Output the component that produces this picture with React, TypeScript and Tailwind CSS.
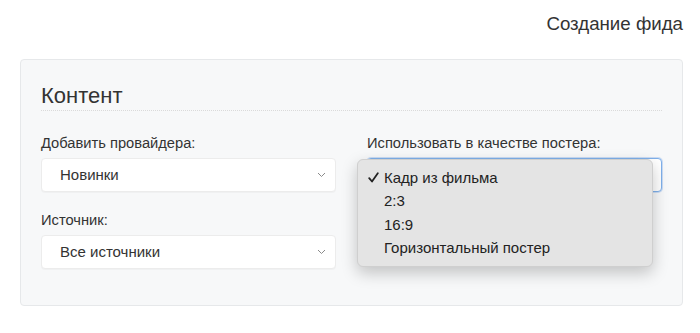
const posterOptions = ["Кадр из фильма", "2:3", "16:9", "Горизонтальный постер"];

function Chevron() {
  return (
    <svg width="9" height="6" viewBox="0 0 9 6" className="shrink-0">
      <path d="M1 1l3.5 3.5L8 1" fill="none" stroke="#8a8a8a" strokeWidth="1" />
    </svg>
  );
}

function Check() {
  return (
    <svg width="11" height="11" viewBox="0 0 11 11">
      <path d="M1.2 6.2l2.8 3.3L9.8 1.2" fill="none" stroke="#222" strokeWidth="1.8" strokeLinecap="round" strokeLinejoin="round" />
    </svg>
  );
}

function FakeSelect({ value, focused }: { value: string; focused?: boolean }) {
  return (
    <div
      className={`flex h-[34px] items-center justify-between rounded-[4px] bg-white pl-[18px] pr-[9px] text-[15px] text-[#333] ${
        focused
          ? "border border-[#7fb0ea] shadow-[0_0_0_1px_rgba(120,170,235,0.35)]"
          : "border border-[#ececec] shadow-[0_1px_1px_rgba(0,0,0,0.03)]"
      }`}
    >
      <span>{value}</span>
      <Chevron />
    </div>
  );
}

export default function App() {
  return (
    <div
      className="h-[333px] w-[700px] bg-white text-[#333]"
      style={{ fontFamily: '"Liberation Sans", Arial, sans-serif' }}
    >
      {/* Header */}
      <div className="flex justify-end pr-[17px] pt-[13px] text-[18.7px] leading-[22px]">
        Создание фида
      </div>

      {/* Panel */}
      <div className="ml-[20px] mt-[24px] h-[247px] w-[663px] rounded-[4px] border border-[#e6e8ea] bg-[#f7f8f9] px-[20px] pt-[23px]">
        <div className="border-b border-dotted border-[#dadada] pb-[2px] text-[22px] leading-[25px]">
          Контент
        </div>

        <div className="mt-[24px] grid grid-cols-2 gap-x-[31px]">
          {/* Left column */}
          <div className="flex flex-col">
            <label className="text-[14.7px] leading-[16px]">Добавить провайдера:</label>
            <div className="mt-[7px]">
              <FakeSelect value="Новинки" />
            </div>
            <label className="mt-[20px] text-[14.7px] leading-[16px]">Источник:</label>
            <div className="mt-[7px]">
              <FakeSelect value="Все источники" />
            </div>
          </div>

          {/* Right column */}
          <div className="flex flex-col">
            <label className="text-[14.7px] leading-[16px]">Использовать в качестве постера:</label>
            <div className="relative mt-[7px]">
              <FakeSelect value="" focused />
              <div className="absolute left-[-10px] top-[1px] z-10 w-[296px] rounded-[6px] border border-[#cfcfcf] bg-[#e4e4e4] py-[6px] shadow-[0_6px_16px_rgba(0,0,0,0.22)]">
                {posterOptions.map((opt, i) => (
                  <div key={opt} className="flex h-[23.5px] items-center text-[15px] text-[#222]">
                    <span className="flex w-[26px] pl-[10px]">{i === 0 && <Check />}</span>
                    <span>{opt}</span>
                  </div>
                ))}
              </div>
            </div>
          </div>
        </div>
      </div>
    </div>
  );
}
